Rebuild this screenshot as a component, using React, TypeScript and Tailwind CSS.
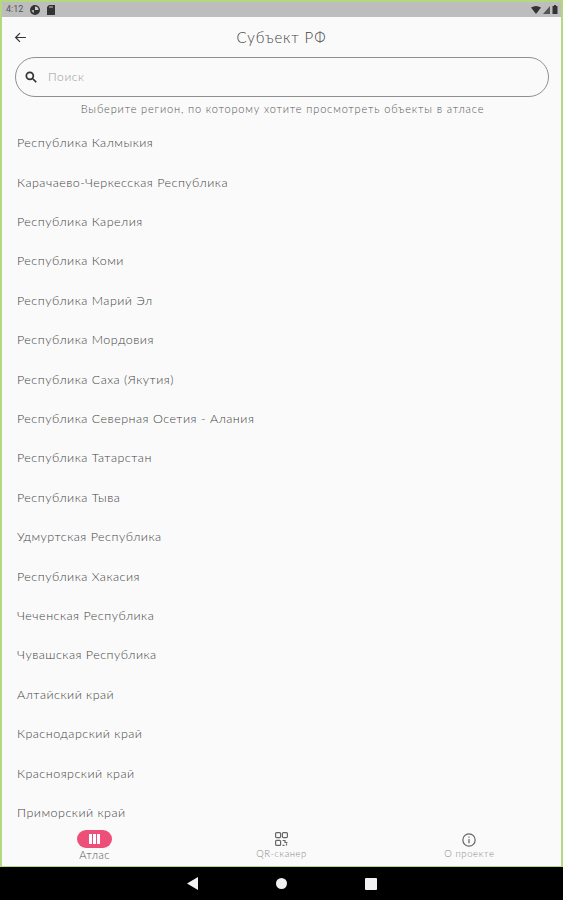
import React from 'react';

const regions = [
  'Республика Калмыкия',
  'Карачаево-Черкесская Республика',
  'Республика Карелия',
  'Республика Коми',
  'Республика Марий Эл',
  'Республика Мордовия',
  'Республика Саха (Якутия)',
  'Республика Северная Осетия - Алания',
  'Республика Татарстан',
  'Республика Тыва',
  'Удмуртская Республика',
  'Республика Хакасия',
  'Чеченская Республика',
  'Чувашская Республика',
  'Алтайский край',
  'Краснодарский край',
  'Красноярский край',
  'Приморский край',
];

export default function App() {
  return (
    <div className="flex h-[900px] w-[563px] flex-col overflow-hidden bg-[#b5d77f] font-['Lato',sans-serif] font-light">
      {/* green frame around the app content */}
      <div className="flex min-h-0 flex-1 flex-col px-[2px] pt-[2px] pb-[1px]">
        <div className="flex h-[15px] shrink-0 items-center justify-between bg-[#bdbdbd] pr-[3px] pl-[4px]">
          <div className="flex items-center gap-[7px]">
            <span className="font-['Roboto',sans-serif] text-[9px] font-normal text-[#555]">4:12</span>
            <svg width="10" height="10" viewBox="0 0 10 10">
              <circle cx="5" cy="5" r="5" fill="#333" />
              <path d="M5 1.5 A3.5 3.5 0 0 1 8.5 5 L5 5 Z" fill="#ccc" />
              <path d="M1.5 5 L4 5 L4 8 A3.5 3.5 0 0 1 1.5 5 Z" fill="#aaa" />
            </svg>
            <svg width="8" height="10" viewBox="0 0 8 10">
              <path d="M0 2 L2 0 L8 0 L8 10 L0 10 Z" fill="#333" />
              <rect x="2.5" y="1" width="1" height="2" fill="#ccc" />
              <rect x="4.5" y="1" width="1" height="2" fill="#ccc" />
            </svg>
          </div>
          <div className="flex items-center gap-[2px]">
            <svg width="10" height="8" viewBox="0 0 10 8">
              <path d="M0 1.5 Q5 -1.5 10 1.5 L5 8 Z" fill="#333" />
            </svg>
            <svg width="7" height="8" viewBox="0 0 7 8">
              <path d="M0 8 L7 0 L7 8 Z" fill="#555" />
            </svg>
            <svg width="6" height="9" viewBox="0 0 6 9">
              <rect x="0.5" y="1" width="5" height="8" fill="#333" />
              <rect x="2" y="0" width="2" height="1" fill="#333" />
            </svg>
          </div>
        </div>

        <div className="flex min-h-0 flex-1 flex-col bg-[#fafafa]">
          <header className="flex h-[40px] shrink-0 items-center px-[12px]">
            <svg width="13" height="13" viewBox="0 0 24 24" fill="none" stroke="#333" strokeWidth="2.2">
              <path d="M22 12H3M11 4l-8 8 8 8" />
            </svg>
            <h1 className="ml-[-13px] flex-1 text-center text-[15px] tracking-[0.9px] text-[#444]">Субъект РФ</h1>
          </header>

          <div className="mx-[13px] mr-[12px] flex h-[40px] shrink-0 items-center rounded-[20px] border border-[#8f8f8f] pl-[8px]">
            <svg width="14" height="14" viewBox="0 0 24 24" fill="none" stroke="#333" strokeWidth="3">
              <circle cx="10" cy="10" r="6" />
              <path d="M15 15l6 6" />
            </svg>
            <span className="ml-[10px] text-[12px] tracking-[0.6px] text-[#999]">Поиск</span>
          </div>

          <p className="mt-[4px] h-[16px] shrink-0 pl-[2px] text-center text-[11px] leading-[16px] tracking-[0.85px] text-[#555]">
            Выберите регион, по которому хотите просмотреть объекты в атласе
          </p>

          <ul className="mt-[7px] min-h-0 flex-1 overflow-hidden pl-[15px]">
            {regions.map((name) => (
              <li key={name} className="flex h-[39.4px] items-center text-[12.5px] tracking-[0.5px] text-[#444]">
                {name}
              </li>
            ))}
          </ul>

          <nav className="grid h-[36px] shrink-0 grid-cols-3 bg-[#fafafa]">
            <div className="flex flex-col items-center pr-[1px]">
              <div className="flex h-[18px] w-[35px] items-center justify-center rounded-full bg-[#ee4f78]">
                <svg width="11" height="10" viewBox="0 0 11 10" fill="#fff">
                  <rect x="0" y="0" width="3" height="10" />
                  <rect x="4" y="0" width="3" height="10" />
                  <rect x="8" y="0" width="3" height="10" />
                </svg>
              </div>
              <span className="text-[11px] leading-[13px] tracking-[0.5px] text-[#555]">Атлас</span>
            </div>
            <div className="flex flex-col items-center pt-[2px]">
              <svg width="13" height="14" viewBox="0 0 13 14" fill="none" stroke="#666" strokeWidth="1.2">
                <rect x="0.6" y="0.6" width="5" height="5" rx="1" />
                <rect x="7.4" y="0.6" width="5" height="5" rx="1" />
                <rect x="0.6" y="8.4" width="5" height="5" rx="1" />
                <path d="M7.5 8.5h2.5v2h2.5M7.5 13.4h2M11.5 11.5v2" />
              </svg>
              <span className="mt-[1px] text-[9.5px] leading-[13px] tracking-[0.5px] text-[#888]">QR-сканер</span>
            </div>
            <div className="flex flex-col items-center pt-[3px] pl-[3px]">
              <svg width="14" height="14" viewBox="0 0 15 15" fill="none" stroke="#666" strokeWidth="1.3">
                <circle cx="7.5" cy="7.5" r="6.6" />
                <path d="M7.5 6.5v4.5M7.5 3.8v1.4" />
              </svg>
              <span className="text-[9.5px] leading-[13px] tracking-[0.6px] text-[#888]">О проекте</span>
            </div>
          </nav>
        </div>
      </div>

      <div className="flex h-[33px] shrink-0 items-center bg-black">
        <div className="flex w-full items-center justify-center gap-[78px]">
          <svg width="11" height="13" viewBox="0 0 11 13">
            <path d="M11 0V13L0 6.5Z" fill="#f2f2f2" />
          </svg>
          <div className="h-[11px] w-[11px] rounded-full bg-[#f2f2f2]" />
          <div className="h-[12px] w-[12px] rounded-[1px] bg-[#f2f2f2]" />
        </div>
      </div>
    </div>
  );
}
